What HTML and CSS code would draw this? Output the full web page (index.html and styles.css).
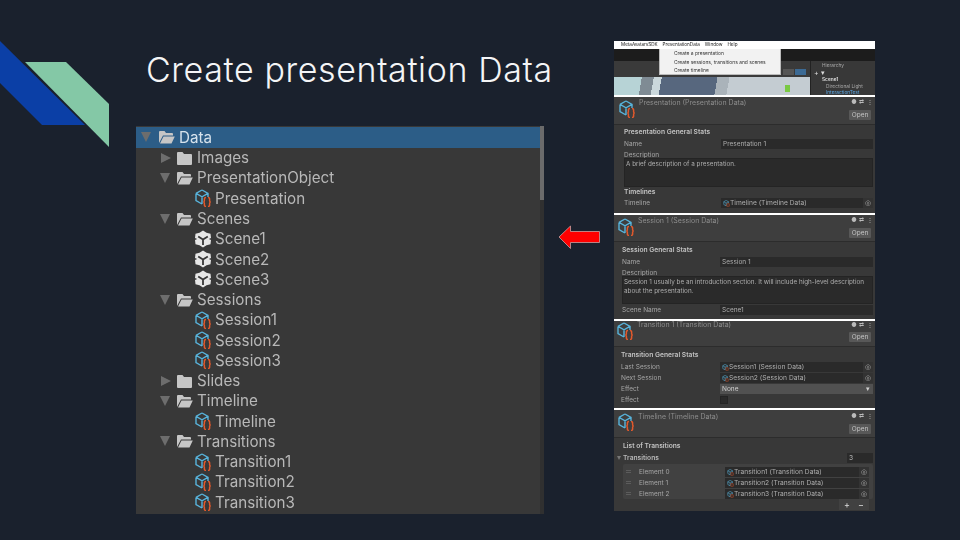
FILE: index.html
```html
<!DOCTYPE html>
<html lang="en">
<head>
<meta charset="utf-8">
<title>Create presentation Data</title>
<link rel="stylesheet" href="styles.css">
</head>
<body>
<svg class="defs" width="0" height="0" aria-hidden="true">
  <symbol id="cube" viewBox="0 0 18 18">
    <path d="M8 1 L14 4.4 V8 M2 4.4 L8 1 M2 4.4 V11.6 L8 15 M2 4.4 L8 7.8 L14 4.4 M8 7.8 V15" fill="none" stroke="#58b4dc" stroke-width="1.4"/>
    <path d="M12 8.6 Q10.2 8.6 10.4 10.4 V11.6 Q10.4 12.8 9.4 13 Q10.4 13.2 10.4 14.4 V15.6 Q10.2 17.4 12 17.4 M14 8.6 Q15.8 8.6 15.6 10.4 V11.6 Q15.6 12.8 16.6 13 Q15.6 13.2 15.6 14.4 V15.6 Q15.800 17.4 14 17.4" fill="none" stroke="#e2592c" stroke-width="1.5"/>
  </symbol>
  <symbol id="unity" viewBox="0 0 18 18">
    <path d="M9 0.5 L12.500 2.800 L16.500 3.800 L17 8 L14.800 9 L17 10 L16.500 14.200 L12.500 15.200 L9 17.500 L5.500 15.200 L1.500 14.200 L1 10 L3.200 9 L1 8 L1.500 3.800 L5.500 2.800 Z" fill="#e6e6e6"/>
    <path d="M9 9.500 L4.200 6.500 M9 9.500 L13.800 6.500 M9 9.500 V15" stroke="#383838" stroke-width="1.800" fill="none"/>
  </symbol>
  <symbol id="open" viewBox="0 0 17 14">
    <path d="M1 13 V2 Q1 1 2 1 H6.5 L8 3 H14 Q15 3 15 4 V5.500 H5 L1 13 Z M2 13.400 L5.500 6.500 H16.800 L13.500 13.400 Z" fill="#c6c6c6"/>
  </symbol>
  <symbol id="closed" viewBox="0 0 17 14">
    <path d="M1 2 Q1 1 2 1 H6.500 L8 3 H15 Q16 3 16 4 V13 Q16 14 15 14 H2 Q1 14 1 13 Z" fill="#c6c6c6"/>
  </symbol>
</svg>

<main class="slide">
  <svg class="logo" width="110" height="150" viewBox="0 0 110 150" aria-hidden="true">
    <polygon points="0,41 85,125 42,125 0,83" fill="#0b3fa6"/>
    <polygon points="25,62 66,62 109,104 109,147" fill="#84c8a6"/>
  </svg>

  <section class="col-left">
    <h1 class="title">Create presentation Data</h1>
    <div class="tree">
      <div class="row lv0 selected"><i class="tri down"></i><svg class="fold"><use href="#open"/></svg><span>Data</span></div>
      <div class="row lv1"><i class="tri shut"></i><svg class="fold"><use href="#closed"/></svg><span>Images</span></div>
      <div class="row lv1"><i class="tri down"></i><svg class="fold"><use href="#open"/></svg><span>PresentationObject</span></div>
      <div class="row lv2"><svg class="asset"><use href="#cube"/></svg><span>Presentation</span></div>
      <div class="row lv1"><i class="tri down"></i><svg class="fold"><use href="#open"/></svg><span>Scenes</span></div>
      <div class="row lv2"><svg class="asset"><use href="#unity"/></svg><span>Scene1</span></div>
      <div class="row lv2"><svg class="asset"><use href="#unity"/></svg><span>Scene2</span></div>
      <div class="row lv2"><svg class="asset"><use href="#unity"/></svg><span>Scene3</span></div>
      <div class="row lv1"><i class="tri down"></i><svg class="fold"><use href="#open"/></svg><span>Sessions</span></div>
      <div class="row lv2"><svg class="asset"><use href="#cube"/></svg><span>Session1</span></div>
      <div class="row lv2"><svg class="asset"><use href="#cube"/></svg><span>Session2</span></div>
      <div class="row lv2"><svg class="asset"><use href="#cube"/></svg><span>Session3</span></div>
      <div class="row lv1"><i class="tri shut"></i><svg class="fold"><use href="#closed"/></svg><span>Slides</span></div>
      <div class="row lv1"><i class="tri down"></i><svg class="fold"><use href="#open"/></svg><span>Timeline</span></div>
      <div class="row lv2"><svg class="asset"><use href="#cube"/></svg><span>Timeline</span></div>
      <div class="row lv1"><i class="tri down"></i><svg class="fold"><use href="#open"/></svg><span>Transitions</span></div>
      <div class="row lv2"><svg class="asset"><use href="#cube"/></svg><span>Transition1</span></div>
      <div class="row lv2"><svg class="asset"><use href="#cube"/></svg><span>Transition2</span></div>
      <div class="row lv2"><svg class="asset"><use href="#cube"/></svg><span>Transition3</span></div>
      <div class="scrollbar"></div>
    </div>
  </section>

  <svg class="arrow" width="43" height="25" viewBox="0 0 43 25" aria-hidden="true">
    <polygon points="1,12 12.500,1 12.500,6.500 41.500,6.500 41.500,17.500 12.500,17.500 12.500,23.500" fill="#ff0000" stroke="#c9a0a0" stroke-width="0.8"/>
  </svg>

  <section class="col-right">
    <div class="shot">
      <div class="menubar"><span>MetaAvatarsSDK</span><span>PresentationData</span><span>Window</span><span>Help</span></div>
      <div class="shot-body">
        <div class="darkstrip"></div>
        <div class="toolstrip">
          <div class="scene-wrap">
            <div class="scenetools"><i class="tool"></i><i class="tool blue"></i></div>
            <div class="scene"><i class="gizmo"></i></div>
          </div>
          <div class="hier">
            <div class="hier-tab">Hierarchy</div>
            <div class="hier-tool">+ &#9662;</div>
            <div class="hier-item root">Scene1</div>
            <div class="hier-item">Directional Light</div>
            <div class="hier-item active">InteractionTest</div>
          </div>
        </div>
        <div class="dropdown">
          <div>Create a presentation</div>
          <div>Create sessions, transitions and scenes</div>
          <div>Create timeline</div>
        </div>
      </div>
    </div>

    <div class="insp p1">
      <div class="head"><svg class="hicon"><use href="#cube"/></svg><div class="htitle">Presentation (Presentation Data)</div><div class="hside"><div class="hbtns">&#9679; &#8644; &#8942;</div><div class="openbtn">Open</div></div></div>
      <div class="body">
        <div class="sect">Presentation General Stats</div>
        <div class="f"><label>Name</label><div class="inp">Presentation 1</div></div>
        <div class="lab">Description</div>
        <div class="area a1">A brief description of a presentation.</div>
        <div class="sect tight">Timelines</div>
        <div class="f"><label>Timeline</label><div class="inp obj"><svg class="mini"><use href="#cube"/></svg><span>Timeline (Timeline Data)</span><b>&#9678;</b></div></div>
      </div>
    </div>

    <div class="insp p2">
      <div class="head"><svg class="hicon"><use href="#cube"/></svg><div class="htitle">Session 1 (Session Data)</div><div class="hside"><div class="hbtns">&#9679; &#8644; &#8942;</div><div class="openbtn">Open</div></div></div>
      <div class="body">
        <div class="sect">Session General Stats</div>
        <div class="f"><label>Name</label><div class="inp">Session 1</div></div>
        <div class="lab">Description</div>
        <div class="area a2">Session 1 usually be an introduction section. It will include high-level description about the presentation.</div>
        <div class="f"><label>Scene Name</label><div class="inp">Scene1</div></div>
      </div>
    </div>

    <div class="insp p3">
      <div class="head"><svg class="hicon"><use href="#cube"/></svg><div class="htitle">Transition 1 (Transition Data)</div><div class="hside"><div class="hbtns">&#9679; &#8644; &#8942;</div><div class="openbtn">Open</div></div></div>
      <div class="body">
        <div class="sect">Transition General Stats</div>
        <div class="f"><label>Last Session</label><div class="inp obj"><svg class="mini"><use href="#cube"/></svg><span>Session1 (Session Data)</span><b>&#9678;</b></div></div>
        <div class="f"><label>Next Session</label><div class="inp obj"><svg class="mini"><use href="#cube"/></svg><span>Session2 (Session Data)</span><b>&#9678;</b></div></div>
        <div class="f"><label>Effect</label><div class="inp select"><span>None</span><b>&#9662;</b></div></div>
        <div class="f"><label>Effect</label><div class="check"></div></div>
      </div>
    </div>

    <div class="insp p4">
      <div class="head"><svg class="hicon"><use href="#cube"/></svg><div class="htitle">Timeline (Timeline Data)</div><div class="hside"><div class="hbtns">&#9679; &#8644; &#8942;</div><div class="openbtn">Open</div></div></div>
      <div class="body">
        <div class="sect">List of Transitions</div>
        <div class="listhead"><span><i class="minitri"></i>Transitions</span><div class="count">3</div></div>
        <div class="list">
          <div class="el"><i class="grip"></i><label>Element 0</label><div class="inp obj"><svg class="mini"><use href="#cube"/></svg><span>Transition1 (Transition Data)</span><b>&#9678;</b></div></div>
          <div class="el"><i class="grip"></i><label>Element 1</label><div class="inp obj"><svg class="mini"><use href="#cube"/></svg><span>Transition2 (Transition Data)</span><b>&#9678;</b></div></div>
          <div class="el"><i class="grip"></i><label>Element 2</label><div class="inp obj"><svg class="mini"><use href="#cube"/></svg><span>Transition3 (Transition Data)</span><b>&#9678;</b></div></div>
        </div>
        <div class="pm"><span>+</span><span>&#8722;</span></div>
      </div>
    </div>
  </section>
</main>
</body>
</html>
```

FILE: styles.css
```css
* { box-sizing: border-box; }
html, body { margin: 0; padding: 0; }
body { width: 960px; height: 540px; overflow: hidden; background: #1a212d; }
.defs { position: absolute; }

.slide {
  position: relative;
  width: 960px;
  height: 540px;
  display: flex;
  align-items: flex-start;
  background: #1a212d;
  font-family: "Inter", "Liberation Sans", sans-serif;
}
.logo { position: absolute; left: 0; top: 0; }

/* Left column */
.col-left { width: 408px; margin-left: 136px; }
.title {
  height: 126px;
  margin: 0;
  padding: 50px 0 0 10px;
  font-family: "Inter", "Open Sans", sans-serif;
  font-size: 34px;
  line-height: 40px;
  font-weight: 300;
  letter-spacing: 0.6px;
  white-space: nowrap;
  color: #f4f5f6;
}
.tree {
  position: relative;
  height: 388px;
  padding-top: 1px;
  background: #383838;
  overflow: hidden;
  filter: blur(0.35px);
}
.row {
  display: flex;
  align-items: center;
  height: 20.28px;
  font-size: 15.2px;
  color: #b8b8b8;
  white-space: nowrap;
}
.row.selected { background: #2c5d87; color: #d6e2ec; height: 20.6px; width: 404px; }
.lv0 { padding-left: 5px; }
.lv1 { padding-left: 24px; }
.lv2 { padding-left: 58px; }
.tri { display: block; flex: none; width: 0; height: 0; }
.tri.down { border-left: 5.500px solid transparent; border-right: 5.500px solid transparent; border-top: 10px solid #6d6d6d; margin-right: 6px; }
.lv0 .tri.down { margin-right: 7px; }
.tri.shut { margin: 0 5px 0 1px; border-top: 5.500px solid transparent; border-bottom: 5.500px solid transparent; border-left: 10px solid #6d6d6d; }
.fold { width: 17px; height: 14px; flex: none; margin-right: 4px; }
.asset { width: 18px; height: 18px; flex: none; margin-right: 3px; }
.tree::after { content: ""; position: absolute; right: 0; top: 0; bottom: 0; width: 4px; background: #303030; }
.scrollbar { position: absolute; right: 0; top: 0; z-index: 1; width: 4px; height: 74px; background: #6b6b6b; }

/* Arrow */
.arrow { flex: none; margin: 225px 0 0 14px; }

/* Right column */
.col-right {
  width: 261px;
  margin: 41px 0 0 13px;
  display: flex;
  flex-direction: column;
  gap: 2px;
  background: #ffffff;
  filter: blur(0.35px);
  font-size: 6.500px;
  color: #a6a6a6;
}
.shot { height: 54px; display: flex; flex-direction: column; background: #3a3a3a; }
.menubar {
  height: 8px;
  flex: none;
  display: flex;
  gap: 5px;
  padding-left: 7px;
  background: #fff;
  color: #222;
  font-size: 4.600px;
  line-height: 8px;
  white-space: nowrap;
}
.shot-body { position: relative; flex: 1; display: flex; flex-direction: column; min-height: 0; }
.darkstrip { height: 12px; flex: none; background: #1c1c1c; }
.toolstrip { flex: 1; display: flex; min-height: 0; }
.scene-wrap { flex: 1; display: flex; flex-direction: column; }
.scenetools { height: 16px; flex: none; display: flex; justify-content: flex-end; align-items: flex-end; gap: 1px; padding: 0 4px 2px 0; background: #3a3a3a; }
.tool { width: 11px; height: 6px; background: #555; }
.tool.blue { background: #3c6a94; }
.scene { position: relative; flex: 1; background: linear-gradient(100deg, #b7d3d6 0 14%, #7f8b94 14% 20%, #cbd8dc 20% 24%, #57677e 24% 52%, #aab3ba 52% 58%, #c4ccd2 58% 100%); }
.gizmo { position: absolute; right: 20px; bottom: 3px; width: 5px; height: 7px; background: #7ac943; }
.hier { width: 65px; flex: none; background: #383838; color: #a8a8a8; font-size: 4.800px; line-height: 6.500px; padding: 1px 0 0 3px; white-space: nowrap; overflow: hidden; border-left: 1px solid #222; }
.hier-tab { padding-left: 8px; height: 7px; }
.hier-tool { color: #ddd; height: 7px; font-size: 7px; line-height: 7px; }
.hier-item { padding-left: 12px; }
.hier-item.root { padding-left: 8px; color: #ddd; font-weight: 600; }
.hier-item.active { color: #5aa4e0; }
.dropdown {
  position: absolute;
  left: 45px;
  top: 0;
  width: 122px;
  height: 26px;
  padding: 0 0 0 14px;
  background: #f2f2f2;
  border: 1px solid #bbb;
  border-top: 0;
  color: #333;
  font-size: 4.900px;
  line-height: 8.500px;
  white-space: nowrap;
}

/* Inspector cards */
.insp { display: flex; flex-direction: column; background: #383838; overflow: hidden; --top: 1px; --ttop: 2px; --itop: 3px; --gap: 4px; --x: 4px; --bx: 10px; --lw: 97px; --hh: 28px; --bt: 2px; }
.p1 { height: 116px; }
.p2 { height: 104px; --x: 3px; --bx: 8px; --lw: 98px; --hh: 27px; --bt: 3px; }
.p3 { height: 87px; --top: 0px; --ttop: 0px; --gap: 3px; --itop: 1px; --x: 2px; --bx: 7px; --lw: 99px; --hh: 26px; --bt: 3px; }
.p4 { height: 101px; --top: 2px; --ttop: 3px; --x: 3px; --bx: 9px; --bt: 3px; }
.head { display: flex; align-items: flex-start; height: var(--hh); flex: none; padding: 0 2px 0 var(--x); background: #3e3e3e; border-bottom: 1px solid #2c2c2c; }
.hicon { width: 18px; height: 18px; flex: none; margin-top: var(--itop); }
.htitle { flex: 1; margin-top: var(--ttop); padding-left: 3px; font-size: 7px; line-height: 8px; color: #8d8d8d; white-space: nowrap; }
.hside { display: flex; flex-direction: column; align-items: flex-end; gap: var(--gap); margin-top: var(--top); }
.hbtns { font-size: 6px; line-height: 8px; word-spacing: 1px; color: #bbb; white-space: nowrap; }
.openbtn { width: 22px; height: 10px; margin-right: 2px; background: #585858; color: #c4c4c4; text-align: center; font-size: 6.500px; line-height: 10px; border-radius: 1px; }
.body { flex: 1; display: flex; flex-direction: column; padding: var(--bt) 2px 0 var(--bx); }
.sect { flex: none; font-size: 6.700px; font-weight: 600; color: #c2c2c2; line-height: 11px; }
.sect.tight { height: 10px; }
.f { display: flex; align-items: center; flex: none; height: 11px; }
.f label { width: var(--lw); flex: none; }
.lab { flex: none; height: 10px; padding-top: 1px; line-height: 10px; }
.inp { flex: 1; min-width: 0; height: 10px; padding-left: 2px; background: #2a2a2a; line-height: 10px; white-space: nowrap; display: flex; color: #adadad; }
.inp.obj span { font-size: 6.700px; }
.inp b { font-weight: 400; margin-left: auto; width: 10px; background: #333; text-align: center; }
.inp.select { background: #515151; color: #d0d0d0; }
.inp.select b { background: none; }
.mini { width: 7px; height: 7px; flex: none; margin: 2px 0 0 0; }
.area { flex: none; background: #2a2a2a; border: 1px solid #242424; padding: 1px 1px 0; font-size: 6.350px; line-height: 8.700px; color: #adadad; margin-top: -1px; }
.a1 { height: 29px; }
.a2 { height: 28px; }
.check { width: 8px; height: 8px; background: #2a2a2a; border: 1px solid #242424; }
.listhead { display: flex; flex: none; justify-content: space-between; align-items: center; height: 11px; margin-left: -6px; font-size: 6.700px; font-weight: 600; color: #b8b8b8; }
.minitri { display: inline-block; width: 0; height: 0; border-left: 2px solid transparent; border-right: 2px solid transparent; border-top: 4px solid #777; margin-right: 2px; }
.count { width: 26px; height: 10px; padding-left: 2px; line-height: 10px; background: #2a2a2a; font-weight: 400; }
.list { flex: none; margin-top: 1px; padding: 2px 4px 0 0; height: 35px; background: #414141; border-radius: 2px; }
.el { display: flex; align-items: center; height: 11px; }
.el .grip { flex: none; width: 5px; height: 3px; margin: 0 8px 0 3px; border-top: 1px solid #5c5c5c; border-bottom: 1px solid #5c5c5c; }
.el label { width: 86px; flex: none; }
.pm { display: flex; flex: none; gap: 8px; align-self: flex-end; justify-content: center; width: 30px; height: 11px; margin-right: 4px; background: #414141; color: #ddd; line-height: 11px; font-size: 9px; }
```
